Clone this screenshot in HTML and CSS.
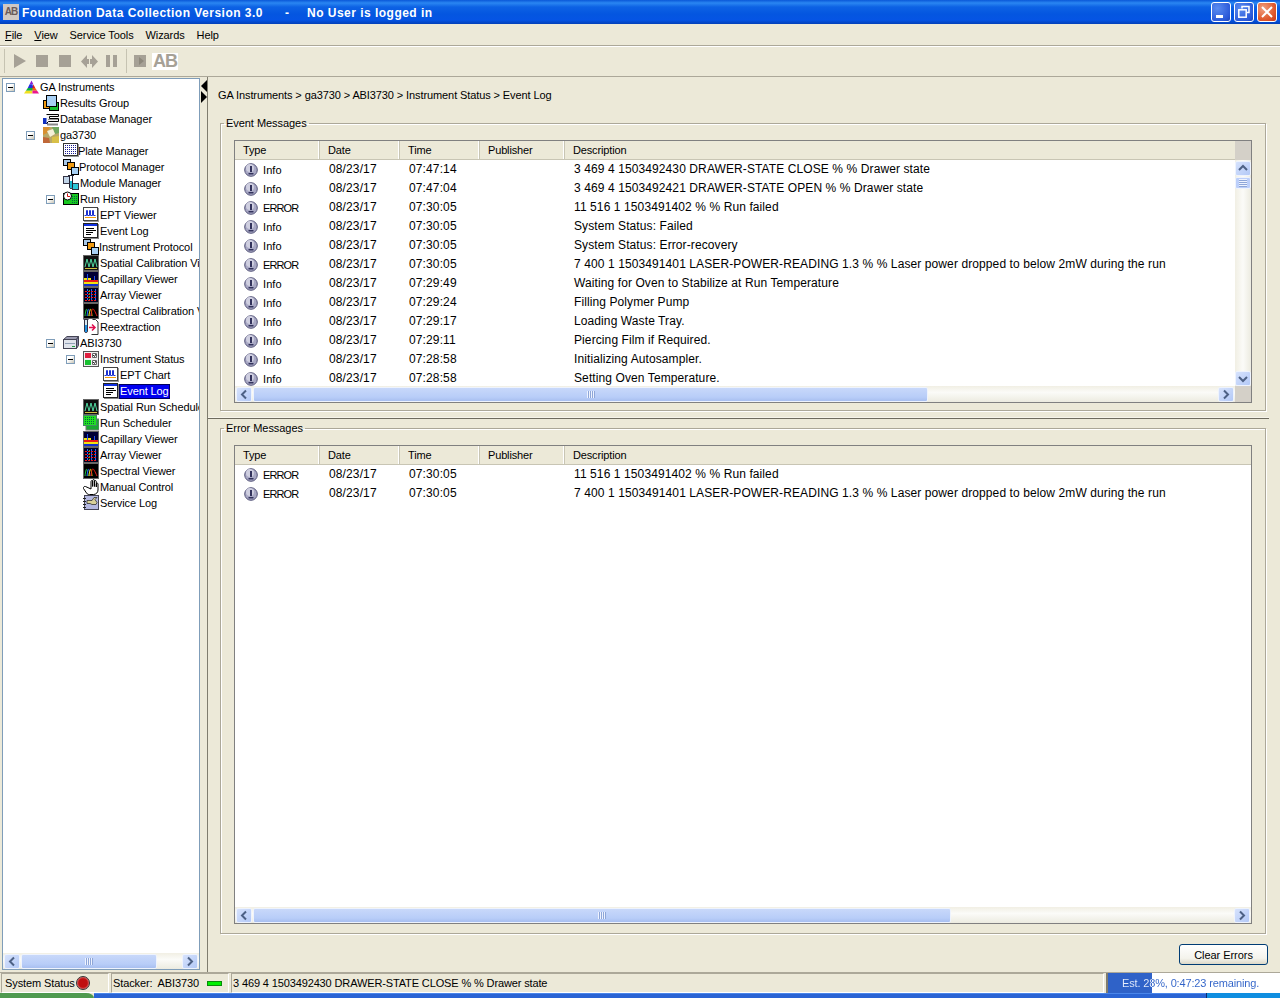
FILE: index.html
```html
<!DOCTYPE html>
<html lang="en">
<head>
<meta charset="utf-8">
<title>Foundation Data Collection</title>
<link rel="stylesheet" href="styles.css">
</head>
<body>
<svg class="defs" width="0" height="0" aria-hidden="true">
  <defs>
    <symbol id="i-ga" viewBox="0 0 18 16"><path d="M9 0L1 15h16z" fill="#fff"/><path d="M9 1L7 5h4z" fill="#8a1fd0"/><path d="M7 5L5 9h6l-1-4z" fill="#2030e0"/><path d="M5 9l-2 3h7l1-3z" fill="#10b040"/><path d="M3 12l-2 3h9v-3z" fill="#f0e020"/><path d="M11 5l2 4h-3z" fill="#e02020"/><path d="M10 9h3l2 3h-5z" fill="#f06010"/><path d="M10 12h5l2 3h-7z" fill="#e81890"/></symbol>
    <symbol id="i-results" viewBox="0 0 16 16"><rect x="0.500" y="5.500" width="9" height="8" fill="#f09a10" stroke="#000"/><rect x="6.500" y="7.500" width="9" height="8" fill="#18c030" stroke="#000"/><rect x="3.500" y="0.500" width="10" height="11" fill="#a8d0f4" stroke="#000"/></symbol>
    <symbol id="i-db" viewBox="0 0 16 16"><rect x="0" y="7" width="5" height="6" fill="#1030c0"/><path d="M3.500 3.500h12v2h-9v2h9v3h-10l-2 2" fill="#f4f4f4" stroke="#000"/><path d="M5 8.500h10" stroke="#999"/><path d="M4 12.500h11v2H4z" fill="#888"/></symbol>
    <symbol id="i-host" viewBox="0 0 16 16"><rect width="16" height="16" fill="#b8a868"/><path d="M0 0h7l-3 6-4 2z" fill="#d89030"/><path d="M9 0h7v6l-4 1z" fill="#70a860"/><path d="M4 4l6-2 2 5-5 3z" fill="#f4f0d8"/><path d="M0 10l6 1 1 5H0z" fill="#c06838"/><path d="M9 10l7-1v7H9z" fill="#d8c048"/></symbol>
    <symbol id="i-plate" viewBox="0 0 16 16"><rect x="0.500" y="0.500" width="14" height="12" fill="#fff" stroke="#333"/><path d="M1 13.500h15M15.500 1v13" stroke="#999"/><path d="M2 2.500h11M2 4.500h11M2 6.500h11M2 8.500h11M2 10.500h11" stroke="#1a1a90" stroke-dasharray="1 1"/></symbol>
    <symbol id="i-proto" viewBox="0 0 16 16"><rect x="0.500" y="0.500" width="7" height="6" fill="#a8c8e8" stroke="#000"/><rect x="4.500" y="3.500" width="7" height="7" fill="#f09a10" stroke="#000"/><rect x="8.500" y="8.500" width="7" height="7" fill="#a8d0f4" stroke="#000"/></symbol>
    <symbol id="i-module" viewBox="0 0 16 16"><rect x="0.500" y="1.500" width="7" height="7" fill="#c0d4e8" stroke="#334"/><rect x="9.500" y="8.500" width="6" height="6" fill="#30c8d8" stroke="#334"/><path d="M5 0.500h6M6.500 1v11a1.500 1.500 0 0 0 3 0V1" fill="#fff" stroke="#223"/><path d="M7 6h2v7H7z" fill="#18b8d0"/></symbol>
    <symbol id="i-hist" viewBox="0 0 16 16"><rect x="0.500" y="2.500" width="15" height="11" fill="#18c820" stroke="#000"/><path d="M9 5.500h6M9 7.500h6M9 9.500h6M9 11.500h6" stroke="#064" stroke-dasharray="1 1"/><circle cx="4.500" cy="5" r="4" fill="#fff" stroke="#000"/><path d="M4.500 2.500V5.500h2.500" fill="none" stroke="#d01010"/></symbol>
    <symbol id="i-ept" viewBox="0 0 16 16"><rect x="0.500" y="0.500" width="14" height="13" fill="#fff" stroke="#444"/><path d="M1 14.500h15M15.500 1v14" stroke="#999"/><path d="M2 10.500h11" stroke="#f09a10"/><path d="M1.500 8.500h2V3.500h1v5h2V3.500h1v5h2V3.500h1v5h2" fill="none" stroke="#1a30d0"/></symbol>
    <symbol id="i-log" viewBox="0 0 16 16"><rect x="0.500" y="0.500" width="14" height="14" fill="#fff" stroke="#222"/><path d="M15.500 1v15M1 15.500h15" stroke="#888"/><rect x="1" y="1" width="13" height="2" fill="#1030e0"/><path d="M3 5.500h8M3 7.500h10M3 9.500h7M3 11.500h5" stroke="#000"/></symbol>
    <symbol id="i-spatial" viewBox="0 0 16 16"><rect x="0.500" y="0.500" width="15" height="15" fill="#101010" stroke="#666"/><path d="M2 12l2-8 2 8 2-8 2 8 2-8 2 8" fill="none" stroke="#50d8a0"/><path d="M2 13.500h12" stroke="#d0c040"/></symbol>
    <symbol id="i-cap" viewBox="0 0 16 16"><rect x="0.500" y="0.500" width="15" height="15" fill="#000034" stroke="#666"/><path d="M1 9h14v2H1z" fill="#e81818"/><path d="M1 11h14v2H1z" fill="#f0e010"/><path d="M1 7h7v2H1z" fill="#f0e010"/><path d="M4.500 3v6M11.500 5v4" stroke="#2050f0"/><path d="M1 13h14v2H1z" fill="#1030d0"/></symbol>
    <symbol id="i-arr" viewBox="0 0 16 16"><rect x="0.500" y="0.500" width="15" height="15" fill="#000020" stroke="#666"/><path d="M2 4.500h12M2 7.500h12M2 10.500h12M2 13.500h12" stroke="#e81818" stroke-dasharray="2 1"/><path d="M4.500 2v12M8.500 2v12M12.500 2v12" stroke="#2060ff" stroke-dasharray="2 1"/><path d="M6.500 3v11" stroke="#20d040" stroke-dasharray="1 2"/></symbol>
    <symbol id="i-spec" viewBox="0 0 16 16"><rect x="0.500" y="0.500" width="15" height="15" fill="#000" stroke="#666"/><path d="M2 13c1-9 2-9 3 0" fill="none" stroke="#20c040"/><path d="M4 13c1-9 2-9 3 0" fill="none" stroke="#2060ff"/><path d="M6 13c1-9 2-9 3 0" fill="none" stroke="#f0e010"/><path d="M8 13c1-10 2-9 6 0" fill="none" stroke="#e81818"/></symbol>
    <symbol id="i-reext" viewBox="0 0 16 16"><path d="M0.500 0.500h5M1.500 1v11a1.500 1.500 0 0 0 3 0V1" fill="#d8e8f0" stroke="#334"/><path d="M2 6h2v7H2z" fill="#2090e0"/><path d="M9.500 0.500h3l2.500 2.500v12.500H8.500" fill="#fff" stroke="#333"/><path d="M6 8.500h6M9 5.500l3 3-3 3" fill="none" stroke="#e01050" stroke-width="1.500"/></symbol>
    <symbol id="i-abi" viewBox="0 0 16 16"><path d="M0.500 4.500L4 1.500h11.500l-2 3z" fill="#9a9ab0" stroke="#445"/><rect x="0.500" y="4.500" width="13" height="9" fill="#e0e4ec" stroke="#445"/><path d="M13.500 4.500l2-3v9l-2 3z" fill="#8080a0" stroke="#445"/><path d="M2 8.500h10" stroke="#90a0b8"/><path d="M9 11.500h3" stroke="#20a040"/></symbol>
    <symbol id="i-status" viewBox="0 0 16 16"><rect x="0.500" y="0.500" width="15" height="15" fill="#f0f0f0" stroke="#555"/><rect x="2" y="2" width="6" height="5" fill="#e02040"/><rect x="2" y="9" width="6" height="5" fill="#18c030"/><path d="M9.500 2.500h4v4h-4zM9.500 9.500h4v4h-4z" fill="#fff" stroke="#666"/><path d="M10 4l1.500 1.500L13 3M10 11l1.500 1.500L13 10" fill="none" stroke="#222"/></symbol>
    <symbol id="i-sched" viewBox="0 0 16 16"><rect x="3" y="4" width="13" height="11" fill="#18a830" stroke="#777"/><rect x="0.500" y="0.500" width="13" height="10" fill="#20e020" stroke="#486"/><path d="M2 2.500h10M2 4.500h10M2 6.500h10M2 8.500h10" stroke="#064" stroke-dasharray="1 1"/></symbol>
    <symbol id="i-hand" viewBox="0 0 16 16"><path d="M0.500 9.500l3 4.500c1 1.500 2 1.500 3 1.500h4c2.500 0 4.500-2 4.500-4.500V5c0-1.200-1.700-1.200-1.700 0v3V2.500c0-1.200-1.800-1.200-1.800 0v5V1.500c0-1.200-1.800-1.200-1.800 0v6V2.500c0-1.200-1.700-1.200-1.700 0V10L2.500 7.500C1.500 7 0 8.200 0.500 9.500z" fill="#fff" stroke="#000"/></symbol>
    <symbol id="i-svc" viewBox="0 0 16 16"><rect x="1.500" y="0.500" width="14" height="14" fill="#b4b8e0" stroke="#445"/><path d="M0 3.500h3M0 6.500h3M0 9.500h3M0 12.500h3" stroke="#222"/><path d="M4 5.500h5l2-3h3l-2 2 2 3-1 2h-4l-2-1H4z" fill="#d8d098" stroke="#333" stroke-width=".8"/></symbol>
    <symbol id="i-info" viewBox="0 0 14 14"><circle cx="7" cy="7" r="6.300" fill="#a8a8c4" stroke="#55557a"/><circle cx="6" cy="5" r="4" fill="#cfcfe0"/><path d="M6 3h2v6H6zM4.500 10h5v1.500h-5z" fill="#33335c"/></symbol>
    <symbol id="i-up" viewBox="0 0 16 15"><path d="M4 9l4-4 4 4" fill="none" stroke="#4d6185" stroke-width="2"/></symbol>
    <symbol id="i-down" viewBox="0 0 16 15"><path d="M4 6l4 4 4-4" fill="none" stroke="#4d6185" stroke-width="2"/></symbol>
    <symbol id="i-left" viewBox="0 0 16 15"><path d="M10 3.500l-4 4 4 4" fill="none" stroke="#4d6185" stroke-width="2"/></symbol>
    <symbol id="i-right" viewBox="0 0 16 15"><path d="M6 3.500l4 4-4 4" fill="none" stroke="#4d6185" stroke-width="2"/></symbol>
  </defs>
</svg>

<header class="titlebar">
  <span class="app-logo">AB</span>
  <span class="title-main">Foundation Data Collection Version 3.0</span>
  <span class="title-dash">-</span>
  <span class="title-user">No User is logged in</span>
  <div class="winbtns">
    <span class="winbtn"><svg width="20" height="20" viewBox="0 0 20 20"><rect x="5" y="13" width="7" height="3" fill="#fff"/></svg></span>
    <span class="winbtn"><svg width="20" height="20" viewBox="0 0 20 20"><path d="M8 6.500V4.500h7v6h-2" fill="none" stroke="#fff" stroke-width="1.500"/><rect x="4.800" y="7.800" width="7.400" height="7.400" fill="none" stroke="#fff" stroke-width="1.500"/></svg></span>
    <span class="winbtn winbtn-close"><svg width="20" height="20" viewBox="0 0 20 20"><path d="M5 5l10 10M15 5L5 15" stroke="#fff" stroke-width="2"/></svg></span>
  </div>
</header>

<nav class="menubar">
  <span class="menu-item"><u>F</u>ile</span>
  <span class="menu-item"><u>V</u>iew</span>
  <span class="menu-item">Service Tools</span>
  <span class="menu-item">Wizards</span>
  <span class="menu-item">Help</span>
</nav>

<div class="toolbar">
  <span class="tool-sep tool-sep-first"></span>
  <svg class="tool t-play" width="14" height="14" viewBox="0 0 14 14"><path d="M1 0l12 7-12 7z"/></svg>
  <svg class="tool t-stop" width="12" height="12" viewBox="0 0 12 12"><rect width="12" height="12"/></svg>
  <svg class="tool t-stop2" width="12" height="12" viewBox="0 0 12 12"><rect width="12" height="12"/></svg>
  <svg class="tool t-seek" width="17" height="13" viewBox="0 0 17 13"><path d="M0 6.500L6 0v4h2v5H6v4zM17 6.500L11 0v4H9v5h2v4z"/></svg>
  <svg class="tool t-pause" width="12" height="12" viewBox="0 0 12 12"><path d="M0 0h4v12H0zM7 0h4v12H7z"/></svg>
  <span class="tool-sep tool-sep-mid"></span>
  <svg class="tool t-step" width="12" height="12" viewBox="0 0 12 12"><rect width="12" height="12"/><path d="M5 2l5 4-5 4z" fill="#8d887c"/></svg>
  <span class="tool-logo">AB</span>
</div>

<main class="workspace">
  <aside class="tree-panel">
    <div class="tree">
      <div class="node d0"><span class="toggle"></span><svg class="ico ico-ga"><use href="#i-ga"/></svg><span class="lbl">GA Instruments</span></div>
      <div class="node d1"><svg class="ico"><use href="#i-results"/></svg><span class="lbl">Results Group</span></div>
      <div class="node d1"><svg class="ico"><use href="#i-db"/></svg><span class="lbl">Database Manager</span></div>
      <div class="node d1"><span class="toggle"></span><svg class="ico"><use href="#i-host"/></svg><span class="lbl">ga3730</span></div>
      <div class="node d2"><svg class="ico tight"><use href="#i-plate"/></svg><span class="lbl">Plate Manager</span></div>
      <div class="node d2"><svg class="ico mid"><use href="#i-proto"/></svg><span class="lbl">Protocol Manager</span></div>
      <div class="node d2"><svg class="ico"><use href="#i-module"/></svg><span class="lbl">Module Manager</span></div>
      <div class="node d2"><span class="toggle"></span><svg class="ico"><use href="#i-hist"/></svg><span class="lbl">Run History</span></div>
      <div class="node d3"><svg class="ico"><use href="#i-ept"/></svg><span class="lbl">EPT Viewer</span></div>
      <div class="node d3"><svg class="ico"><use href="#i-log"/></svg><span class="lbl">Event Log</span></div>
      <div class="node d3"><svg class="ico mid"><use href="#i-proto"/></svg><span class="lbl">Instrument Protocol</span></div>
      <div class="node d3"><svg class="ico"><use href="#i-spatial"/></svg><span class="lbl">Spatial Calibration Viewer</span></div>
      <div class="node d3"><svg class="ico"><use href="#i-cap"/></svg><span class="lbl">Capillary Viewer</span></div>
      <div class="node d3"><svg class="ico"><use href="#i-arr"/></svg><span class="lbl">Array Viewer</span></div>
      <div class="node d3"><svg class="ico"><use href="#i-spec"/></svg><span class="lbl">Spectral Calibration Viewer</span></div>
      <div class="node d3"><svg class="ico"><use href="#i-reext"/></svg><span class="lbl">Reextraction</span></div>
      <div class="node d2"><span class="toggle"></span><svg class="ico"><use href="#i-abi"/></svg><span class="lbl">ABI3730</span></div>
      <div class="node d3"><span class="toggle"></span><svg class="ico"><use href="#i-status"/></svg><span class="lbl">Instrument Status</span></div>
      <div class="node d4"><svg class="ico"><use href="#i-ept"/></svg><span class="lbl">EPT Chart</span></div>
      <div class="node d4"><svg class="ico"><use href="#i-log"/></svg><span class="lbl selected">Event Log</span></div>
      <div class="node d3"><svg class="ico"><use href="#i-spatial"/></svg><span class="lbl">Spatial Run Scheduler</span></div>
      <div class="node d3"><svg class="ico"><use href="#i-sched"/></svg><span class="lbl">Run Scheduler</span></div>
      <div class="node d3"><svg class="ico"><use href="#i-cap"/></svg><span class="lbl">Capillary Viewer</span></div>
      <div class="node d3"><svg class="ico"><use href="#i-arr"/></svg><span class="lbl">Array Viewer</span></div>
      <div class="node d3"><svg class="ico"><use href="#i-spec"/></svg><span class="lbl">Spectral Viewer</span></div>
      <div class="node d3"><svg class="ico"><use href="#i-hand"/></svg><span class="lbl">Manual Control</span></div>
      <div class="node d3"><svg class="ico"><use href="#i-svc"/></svg><span class="lbl">Service Log</span></div>
    </div>
    <div class="hscroll">
      <span class="sbtn"><svg width="16" height="15"><use href="#i-left"/></svg></span>
      <span class="thumb thumb-tree"><span class="grip"></span></span>
      <span class="track"></span>
      <span class="sbtn"><svg width="16" height="15"><use href="#i-right"/></svg></span>
    </div>
  </aside>

  <div class="splitter">
    <span class="arrow-left"></span>
    <span class="arrow-right"></span>
  </div>

  <section class="content">
    <div class="breadcrumb">GA Instruments &gt; ga3730 &gt; ABI3730 &gt; Instrument Status &gt; Event Log</div>

    <fieldset class="group group-events">
      <legend>Event Messages</legend>
      <div class="tbl tbl-v">
        <div class="tbl-main">
          <div class="thead">
            <span class="th c-type">Type</span><span class="th c-date">Date</span><span class="th c-time">Time</span><span class="th c-pub">Publisher</span><span class="th c-desc">Description</span>
          </div>
          <div class="tbody">
            <div class="row"><span class="c-type cell-type"><svg class="info"><use href="#i-info"/></svg>Info</span><span class="c-date">08/23/17</span><span class="c-time">07:47:14</span><span class="c-pub"></span><span class="c-desc">3 469 4 1503492430 DRAWER-STATE CLOSE % % Drawer state</span></div>
            <div class="row"><span class="c-type cell-type"><svg class="info"><use href="#i-info"/></svg>Info</span><span class="c-date">08/23/17</span><span class="c-time">07:47:04</span><span class="c-pub"></span><span class="c-desc">3 469 4 1503492421 DRAWER-STATE OPEN % % Drawer state</span></div>
            <div class="row"><span class="c-type cell-type cell-err"><svg class="info"><use href="#i-info"/></svg>ERROR</span><span class="c-date">08/23/17</span><span class="c-time">07:30:05</span><span class="c-pub"></span><span class="c-desc">11 516 1 1503491402 % % Run failed</span></div>
            <div class="row"><span class="c-type cell-type"><svg class="info"><use href="#i-info"/></svg>Info</span><span class="c-date">08/23/17</span><span class="c-time">07:30:05</span><span class="c-pub"></span><span class="c-desc">System Status: Failed</span></div>
            <div class="row"><span class="c-type cell-type"><svg class="info"><use href="#i-info"/></svg>Info</span><span class="c-date">08/23/17</span><span class="c-time">07:30:05</span><span class="c-pub"></span><span class="c-desc">System Status: Error-recovery</span></div>
            <div class="row"><span class="c-type cell-type cell-err"><svg class="info"><use href="#i-info"/></svg>ERROR</span><span class="c-date">08/23/17</span><span class="c-time">07:30:05</span><span class="c-pub"></span><span class="c-desc">7 400 1 1503491401 LASER-POWER-READING 1.3 % % Laser power dropped to below 2mW during the run</span></div>
            <div class="row"><span class="c-type cell-type"><svg class="info"><use href="#i-info"/></svg>Info</span><span class="c-date">08/23/17</span><span class="c-time">07:29:49</span><span class="c-pub"></span><span class="c-desc">Waiting for Oven to Stabilize at Run Temperature</span></div>
            <div class="row"><span class="c-type cell-type"><svg class="info"><use href="#i-info"/></svg>Info</span><span class="c-date">08/23/17</span><span class="c-time">07:29:24</span><span class="c-pub"></span><span class="c-desc">Filling Polymer Pump</span></div>
            <div class="row"><span class="c-type cell-type"><svg class="info"><use href="#i-info"/></svg>Info</span><span class="c-date">08/23/17</span><span class="c-time">07:29:17</span><span class="c-pub"></span><span class="c-desc">Loading Waste Tray.</span></div>
            <div class="row"><span class="c-type cell-type"><svg class="info"><use href="#i-info"/></svg>Info</span><span class="c-date">08/23/17</span><span class="c-time">07:29:11</span><span class="c-pub"></span><span class="c-desc">Piercing Film if Required.</span></div>
            <div class="row"><span class="c-type cell-type"><svg class="info"><use href="#i-info"/></svg>Info</span><span class="c-date">08/23/17</span><span class="c-time">07:28:58</span><span class="c-pub"></span><span class="c-desc">Initializing Autosampler.</span></div>
            <div class="row"><span class="c-type cell-type"><svg class="info"><use href="#i-info"/></svg>Info</span><span class="c-date">08/23/17</span><span class="c-time">07:28:58</span><span class="c-pub"></span><span class="c-desc">Setting Oven Temperature.</span></div>
          </div>
        </div>
        <div class="vscroll">
          <span class="corner corner-top"></span>
          <span class="sbtn sbtn-v"><svg width="16" height="15"><use href="#i-up"/></svg></span>
          <span class="vthumb"><span class="vgrip"></span></span>
          <span class="vtrack"></span>
          <span class="sbtn sbtn-v"><svg width="16" height="15"><use href="#i-down"/></svg></span>
        </div>
        <div class="hscroll hscroll-tbl">
          <span class="sbtn"><svg width="16" height="15"><use href="#i-left"/></svg></span>
          <span class="thumb thumb-events"><span class="grip"></span></span>
          <span class="track"></span>
          <span class="sbtn"><svg width="16" height="15"><use href="#i-right"/></svg></span>
        </div>
        <span class="corner"></span>
      </div>
    </fieldset>

    <div class="divider"></div>

    <fieldset class="group group-errors">
      <legend>Error Messages</legend>
      <div class="tbl tbl-h">
        <div class="tbl-main">
          <div class="thead">
            <span class="th c-type">Type</span><span class="th c-date">Date</span><span class="th c-time">Time</span><span class="th c-pub">Publisher</span><span class="th c-desc">Description</span>
          </div>
          <div class="tbody">
            <div class="row"><span class="c-type cell-type cell-err"><svg class="info"><use href="#i-info"/></svg>ERROR</span><span class="c-date">08/23/17</span><span class="c-time">07:30:05</span><span class="c-pub"></span><span class="c-desc">11 516 1 1503491402 % % Run failed</span></div>
            <div class="row"><span class="c-type cell-type cell-err"><svg class="info"><use href="#i-info"/></svg>ERROR</span><span class="c-date">08/23/17</span><span class="c-time">07:30:05</span><span class="c-pub"></span><span class="c-desc">7 400 1 1503491401 LASER-POWER-READING 1.3 % % Laser power dropped to below 2mW during the run</span></div>
          </div>
        </div>
        <div class="hscroll hscroll-tbl">
          <span class="sbtn"><svg width="16" height="15"><use href="#i-left"/></svg></span>
          <span class="thumb thumb-errors"><span class="grip"></span></span>
          <span class="track"></span>
          <span class="sbtn"><svg width="16" height="15"><use href="#i-right"/></svg></span>
        </div>
      </div>
    </fieldset>

    <div class="actions"><button class="btn" type="button">Clear Errors</button></div>
  </section>
</main>

<footer class="statusbar">
  <div class="cell cell-sys">System Status<span class="led"></span></div>
  <div class="cell cell-stacker"><span class="stacker-label">Stacker:</span><span>ABI3730</span><span class="green-bar"></span></div>
  <div class="cell cell-msg">3 469 4 1503492430 DRAWER-STATE CLOSE % % Drawer state</div>
  <div class="cell-progress"><span class="progress-text">Est. 28%, 0:47:23 remaining.</span></div>
</footer>
<div class="taskbar"><span class="start"></span><span class="task-mid"></span><span class="tray"></span></div>
</body>
</html>
```

FILE: styles.css
```css
* { box-sizing: border-box; }
html, body { margin: 0; padding: 0; }
body {
  width: 1280px;
  height: 998px;
  overflow: hidden;
  display: flex;
  flex-direction: column;
  background: #ece9d8;
  color: #000;
  font: 11px/14px "Liberation Sans", Arial, sans-serif;
}
.defs { position: absolute; }

/* Title bar */
.titlebar {
  height: 24px;
  flex: none;
  display: flex;
  align-items: center;
  padding: 1px 0 0 3px;
  color: #fff;
  font: bold 12px/16px "Liberation Sans", Arial, sans-serif;
  letter-spacing: .48px;
  white-space: nowrap;
  background: linear-gradient(180deg, #0a58d8 0, #2a86f2 3px, #0d62e4 7px, #0456e0 14px, #0554e4 20px, #0340b8 24px);
}
.app-logo {
  width: 16px;
  height: 16px;
  margin: -1px 3px 0 0;
  background: #cfc8c4;
  color: #6a5a5a;
  font: bold 10px/16px "Liberation Sans", sans-serif;
  letter-spacing: -1px;
  text-align: center;
}
.title-main { width: 263px; flex: none; }
.title-dash { width: 22px; flex: none; }
.winbtns { margin: -1px 0 0 auto; display: flex; gap: 3px; padding-right: 3px; }
.winbtn {
  width: 20px;
  height: 20px;
  display: block;
  border: 1px solid #fff;
  border-radius: 3px;
  background: radial-gradient(circle at 30% 30%, #5a8cf0, #2a58d8 75%, #1c44b8);
  overflow: hidden;
}
.winbtn svg { display: block; margin: -1px; }
.winbtn-close { background: radial-gradient(circle at 30% 30%, #f0a080, #e05c30 60%, #c83818); }

/* Menu */
.menubar {
  height: 22px;
  flex: none;
  display: flex;
  align-items: center;
  padding-left: 5px;
  gap: 12px;
  border-bottom: 1px solid #aca899;
  box-shadow: 0 1px 0 #fff;
  font-size: 11px;
  letter-spacing: -.1px;
}

/* Toolbar */
.toolbar {
  height: 31px;
  flex: none;
  display: flex;
  align-items: center;
  border-bottom: 1px solid #aca899;
  fill: #a6a196;
}
.tool { flex: none; display: block; }
.tool-sep { flex: none; width: 1px; height: 24px; background: #c6c3b2; }
.tool-sep-first { margin-left: 4px; }
.t-play { margin-left: 8px; }
.t-stop { margin-left: 9px; }
.t-stop2 { margin-left: 11px; }
.t-seek { margin-left: 10px; }
.t-pause { margin-left: 8px; }
.tool-sep-mid { margin-left: 8px; }
.t-step { margin-left: 7px; }
.tool-logo {
  margin-left: 6px;
  padding: 0 1px;
  background: #fff;
  color: #a6a196;
  font: bold 18px/17px "Liberation Sans", sans-serif;
  letter-spacing: -1px;
}

/* Workspace */
.workspace { flex: 1; min-height: 0; display: flex; }
.tree-panel {
  width: 198px;
  flex: none;
  margin: 1px 0 2px 2px;
  border: 1px solid #7f9db9;
  background: #fff;
  display: flex;
  flex-direction: column;
}
.tree { flex: 1; min-height: 0; overflow: hidden; font-size: 11px; }
.node { height: 16px; display: flex; align-items: center; white-space: nowrap; }
.d0 { padding-left: 20px; }
.d1 { padding-left: 40px; }
.d2 { padding-left: 60px; }
.d3 { padding-left: 80px; }
.d4 { padding-left: 100px; }
.toggle {
  position: relative;
  flex: none;
  width: 9px;
  height: 9px;
  margin: 0 8px 0 -17px;
  border: 1px solid #7f9db9;
  background: linear-gradient(135deg, #fff 40%, #c8c4b4);
}
.toggle::after { content: ""; position: absolute; left: 1px; top: 3px; width: 5px; height: 1px; background: #000; }
.ico { flex: none; width: 16px; height: 16px; margin-right: 1px; display: block; }
.ico-ga { width: 17px; margin-right: 0; }
.ico.tight { margin-right: -1px; }
.ico.mid { margin-right: 0; }
.lbl { padding: 0 1px 0 0; line-height: 15px; letter-spacing: -.1px; }
.selected { background: #0000f0; color: #fff; padding-left: 1px; margin-left: -1px; outline: 1px solid #000060; outline-offset: -1px; }

/* Scroll bars */
.hscroll { flex: none; display: flex; align-items: center; height: 16px; background: linear-gradient(180deg, #f1efe4, #fbfbf8 40%, #ecebe0); padding: 0 1px; }
.sbtn {
  flex: none;
  display: block;
  width: 16px;
  height: 15px;
  border: 1px solid #eef3fd;
  border-radius: 2px;
  background: linear-gradient(135deg, #d6e2fc, #b3c9f7);
  overflow: hidden;
}
.sbtn svg { display: block; margin: -1px; }
.thumb {
  flex: none;
  height: 15px;
  margin-left: 1px;
  border: 1px solid #eef3fd;
  border-radius: 2px;
  background: linear-gradient(180deg, #c8d8fa, #b8cdf8 70%, #a8bff0);
  display: flex;
  align-items: center;
  justify-content: center;
}
.thumb-tree { width: 136px; }
.thumb-events { width: 675px; }
.thumb-errors { width: 698px; }
.grip { width: 8px; height: 7px; background: repeating-linear-gradient(90deg, #eef3ff 0 1px, #8ea6d8 1px 2px); }
.track { flex: 1; }

/* Splitter */
.splitter { width: 7px; flex: none; padding: 3px 0 0 1px; }
.arrow-left, .arrow-right { display: block; width: 0; height: 0; border-top: 6px solid transparent; border-bottom: 6px solid transparent; }
.arrow-left { border-right: 6px solid #000; margin-bottom: -1px; }
.arrow-right { border-left: 6px solid #000; }

/* Content */
.content {
  flex: 1;
  min-width: 0;
  border-left: 1px solid #7f7c6e;
  padding: 0 14px 0 10px;
  display: flex;
  flex-direction: column;
}
.breadcrumb { height: 39px; padding-top: 11px; line-height: 15px; letter-spacing: -.1px; }
.group {
  margin: 0 0 0 2px;
  padding: 0 13px 0 13px;
  min-width: 0;
  border: 1px solid #aca899;
  box-shadow: 1px 1px 0 #fff, inset 1px 1px 0 #fff;
}
.group legend { margin-left: -10px; padding: 0 2px; height: 14px; line-height: 14px; font-size: 11px; letter-spacing: -.05px; }
.group-events { height: 295px; flex: none; }
.group-errors { height: 513px; flex: none; }
.divider { height: 10px; flex: none; margin: 0 -3px 0 -10px; background: linear-gradient(180deg, transparent 6px, #f6f4ea 6px, #f6f4ea 7px, #6e6b5e 7px, #6e6b5e 8px, transparent 8px); }

/* Tables */
.tbl {
  margin-top: 10px;
  border: 1px solid #808080;
  background: #fff;
  display: grid;
}
.tbl-v { height: 263px; grid-template-columns: minmax(0, 1fr) 16px; grid-template-rows: 245px 16px; }
.tbl-h { height: 479px; grid-template-columns: minmax(0, 1fr); grid-template-rows: 461px 16px; }
.tbl-main { min-width: 0; overflow: hidden; }
.thead { height: 19px; display: flex; background: #ece9d8; border-bottom: 1px solid #c8c5b4; }
.th { border-right: 1px solid #c8c5b4; box-shadow: inset -1px 0 0 #fff; padding-left: 8px; line-height: 19px; letter-spacing: -.15px; }
.th.c-desc { border-right: 0; box-shadow: none; flex: 1; }
.c-type { width: 85px; flex: none; }
.c-date { width: 80px; flex: none; }
.c-time { width: 80px; flex: none; }
.c-pub { width: 85px; flex: none; }
.row { height: 19px; display: flex; font-size: 12px; line-height: 19px; white-space: nowrap; letter-spacing: .1px; }
.row .c-date, .row .c-time, .row .c-desc { padding-left: 9px; }
.row .c-date { letter-spacing: .12px; }
.row .c-time { letter-spacing: .12px; }
.cell-type { display: flex; align-items: center; padding-left: 9px; font-size: 11px; padding-top: 2px; }
.cell-err { letter-spacing: -.9px; }
.info { width: 14px; height: 14px; margin: -2px 5px 0 0; flex: none; }
.vscroll { display: flex; flex-direction: column; background: linear-gradient(90deg, #f1efe4, #fbfbf8 50%, #ecebe0); align-items: center; }
.corner { display: block; background: #d4d0c8; }
.corner-top { width: 100%; height: 19px; flex: none; }
.sbtn-v { margin-top: 1px; }
.vthumb { flex: none; width: 16px; height: 12px; border: 1px solid #eef3fd; border-radius: 2px; background: #bccffa; display: flex; align-items: center; justify-content: center; margin-top: 1px; }
.vgrip { width: 8px; height: 8px; background: repeating-linear-gradient(180deg, #eef3ff 0 1px, #8ea6d8 1px 2px); }
.vtrack { flex: 1; }
.hscroll-tbl { height: 16px; }

/* Buttons */
.actions { display: flex; justify-content: flex-end; margin: 10px -2px 0 0; }
.btn {
  width: 89px;
  height: 21px;
  padding: 0;
  border: 1px solid #003c74;
  border-radius: 3px;
  background: linear-gradient(180deg, #fff, #f4f3ec 70%, #dcd8c8);
  color: #000;
  font: 11px/14px "Liberation Sans", Arial, sans-serif;
  letter-spacing: -.05px;
}

/* Status bar */
.statusbar {
  height: 21px;
  flex: none;
  display: flex;
  border-top: 1px solid #aca899;
  padding-left: 1px;
  font-size: 11px;
  letter-spacing: -.1px;
}
.cell {
  display: flex;
  align-items: center;
  border-top: 1px solid #aca899;
  border-left: 1px solid #aca899;
  border-right: 1px solid #fff;
  border-bottom: 1px solid #fff;
  white-space: nowrap;
}
.cell-sys { width: 108px; padding-left: 3px; }
.cell-stacker { width: 118px; margin-left: 2px; padding-left: 1px; }
.cell-msg { width: 873px; margin-left: 2px; padding-left: 1px; letter-spacing: -.13px; }
.stacker-label { margin-right: 5px; }
.led {
  width: 14px;
  height: 14px;
  margin-left: 1px;
  border-radius: 50%;
  border: 1px solid #333;
  background: radial-gradient(circle, #c01010 50%, #e08080 75%, #801010);
}
.green-bar { width: 15px; height: 5px; margin-left: 8px; background: #00f000; border: 1px solid #0a8a0a; }
.cell-progress {
  flex: 1;
  margin-left: 2px;
  border-left: 2px solid #7f7c6e;
  background: linear-gradient(90deg, #2f62c8 44px, #fff 44px);
  padding-left: 14px;
  font-size: 11px;
  line-height: 20px;
  white-space: nowrap;
  letter-spacing: -.15px;
}
.progress-text {
  background: linear-gradient(90deg, #e8eefc 30px, #2f62c8 30px);
  -webkit-background-clip: text;
  background-clip: text;
  color: transparent;
}

/* Task bar */
.taskbar { height: 5px; flex: none; display: flex; }
.start { width: 94px; background: #4f9a4f; border-top-right-radius: 8px 5px; }
.task-mid { flex: 1; background: #2a64d4; border-top: 1px solid #4a86ea; }
.tray { width: 74px; background: #0f8ee0; border-left: 1px solid #0b2a70; }
```
